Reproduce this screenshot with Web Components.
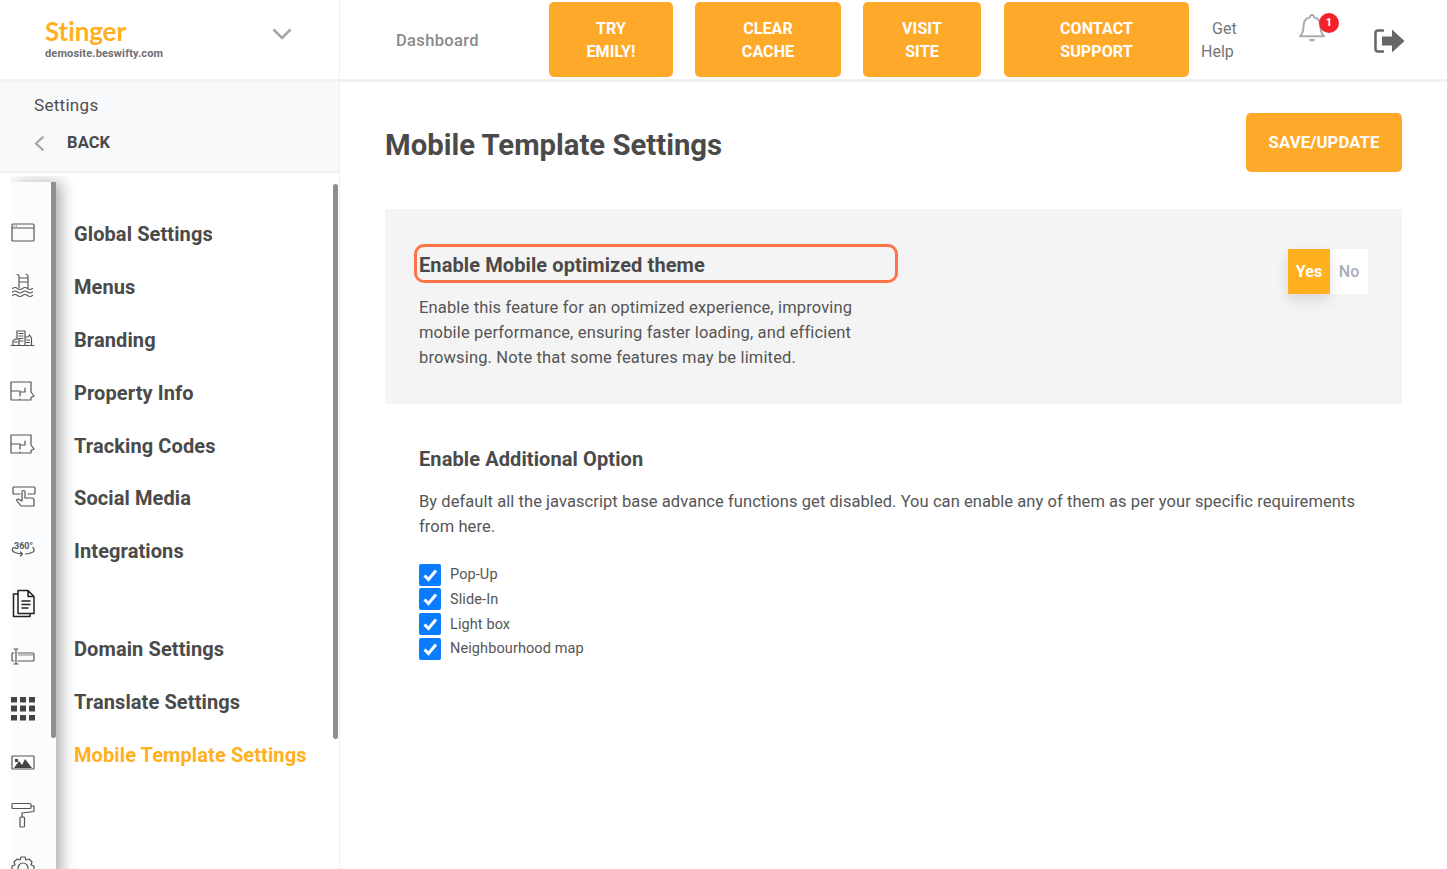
<!DOCTYPE html>
<html lang="en"><head><meta charset="utf-8"><title>Mobile Template Settings</title>
<style>
html,body{margin:0;height:100%;overflow:hidden;background:#fff}
body{font-family:Roboto,"Liberation Sans",sans-serif;color:#4a4a4a}
</style></head><body>
<app-shell></app-shell>
<script>
const S='fill="none" stroke="#555" stroke-width="1.2" stroke-linejoin="round" stroke-linecap="round"';
const ICONS={
browser:`<path ${S} d="M1 5q0-1 1-1h20q1 0 1 1v15q0 1-1 1H2q-1 0-1-1zM1 8h22"/><path stroke="#555" stroke-dasharray="1 1" d="M3 6h4"/>`,
pool:`<path ${S} d="M6 1.500q2 0 2 2v11M15 1.500q2 0 2 2v11M8 5h9M8 9h9M1.500 15.500q2.500-2 5 0t5 0 5 0 5 0M1.500 19q2.500-2 5 0t5 0 5 0 5 0M1.500 22.500q2.500-2 5 0t5 0 5 0 5 0"/>`,
city:`<path ${S} d="M0 19.500h23M2 19.500v-5l3-1.500h3v6.500M6 13V5h8v14.500M14 11h3l1.500-2 2 3v7.500M8 7.500h4M8 10h4M8 12.500h4M8 15h4M3.500 16h3M15.500 14h3M15.500 16.500h3"/>`,
plan:`<path ${S} d="M0 3h20v10l3 4-3 1.500V21H1q-1 0-1-1V3M0 12h9M14 9v4H9v4M9 21v-1"/>`,
touch:`<path ${S} d="M3 2h20q1 0 1 1v5q0 1-1 1h-6M9 9H3q-1 0-1-1V3q0-1 1-1M11 15V7q0-1.500 1.500-1.500T14 7v6h7q2 0 2 2v6H10l-4-5q-1-2 1-2l4 2"/>`,
deg:`<path ${S} d="M2.500 9.500Q-.5 12.500 4 14.500q3.500 1.200 7.500 1.500l-2-2m2 2-2 2M14.500 16q5-.4 7.500-2 2.500-2 0-4.500"/><text x="12.500" y="11" text-anchor="middle" font-family="Roboto,sans-serif" font-size="9" font-weight="700" fill="#555">360°</text>`,
doc:`<path fill="none" stroke="#222" stroke-width="1.500" stroke-linejoin="round" d="M7 1.500h10l6 6v17H7zM17 1.500v6h6M7 5H2.500v22.500H19V24.500"/><path stroke="#222" stroke-width="1.300" d="M10.500 12h9M10.500 15.500h9M10.500 19h7"/>`,
domain:`<path ${S} d="M7 9h15q1 0 1 1v6q0 1-1 1H7M3 9H2q-1 0-1 1v6q0 1 1 1h1M5 5v15M3 5h4M3 20h4"/><path stroke="#999" stroke-width="1.200" d="M7 11h15"/>`,
grid:`<path fill="#444" d="M0 0h6v5.500H0zM9 0h6v5.500H9zM18 0h6v5.500h-6zM0 8.500h6v6H0zM9 8.500h6v6H9zM18 8.500h6v6h-6zM0 18h6v5.500H0zM9 18h6v5.500H9zM18 18h6v5.500h-6z"/>`,
image:`<g transform="translate(0 5)"><path ${S} d="M1 1.500q0-.500.500-.500h21q.500 0 .500.500v12q0 .500-.500.500H1.500q-.500 0-.500-.500z"/><path fill="#444" d="M3 13l5-7 3 4 3-6 7 9zM4 4h3v3H4z"/></g>`,
roller:`<path ${S} d="M2 1.500h17q1 0 1 1v3q0 1-1 1H2q-1 0-1-1v-3q0-1 1-1zM20 4h3v5.500l-12 1.500v4"/><path ${S} stroke-width="1.400" d="M10 15h2.500q1 0 1 1v8q0 1-1 1H10q-1 0-1-1v-8q0-1 1-1z"/>`,
gear:`<path ${S} stroke-width="1.300" d="M10 1h4l1 3 3-1 3 3-1 3 3 1v4l-3 1 1 3-3 3-3-1-1 3h-4l-1-3-3 1-3-3 1-3-3-1v-4l3-1-1-3 3-3 3 1z"/><circle ${S} stroke-width="1.300" cx="12" cy="12" r="5"/>`
};
function comp(name,html){
  customElements.define(name,class extends HTMLElement{
    connectedCallback(){
      if(this.shadowRoot)return;
      const r=this.attachShadow({mode:'open'});
      r.innerHTML=typeof html==='function'?html(this):html;
    }
  });
}
comp('cta-button',el=>`<style>
:host{display:flex;align-items:center;justify-content:center;box-sizing:border-box;background:#ffa92b;border-radius:5px;color:#fff;font-weight:700;font-size:${el.getAttribute('size')||16}px;text-align:center;line-height:23px;letter-spacing:.1px}
</style><slot></slot>`);
comp('top-bar',`<style>
:host{display:flex;height:79px;border-bottom:3px solid #f1f1f1;background:#fff;box-sizing:content-box;position:relative}
.brand{width:340px;box-sizing:border-box;border-right:1px solid #f1f1f1;padding:18px 0 0 45px;position:relative;flex:none}
.logo{font:700 26px/26px Lato,sans-serif;color:#ffb01c;letter-spacing:-.1px}
.site{font:700 11px/13px Roboto,sans-serif;color:#6f6f6f;margin-top:3px;letter-spacing:.15px}
.chev{position:absolute;left:272px;top:28px}
nav{flex:1;display:flex;align-items:center;height:79px}
.dash{font-weight:500;font-size:16.500px;color:#8a8a8a;margin-left:56px;width:153px;letter-spacing:.35px;flex:none;margin-top:2px}
cta-button{height:75px;flex:none;margin-right:22px}
.help{width:57px;margin-left:-11px;font-size:16px;line-height:23px;color:#757575;flex:none}
.help span{display:block;padding-left:11px}
.help span:first-child{padding-left:22px}
.bell{position:relative;width:40px;height:40px;margin-left:52px;flex:none;align-self:flex-start;margin-top:13px}
.badge{position:absolute;left:20px;top:0;width:20px;height:20px;border-radius:50%;background:#f5222d;color:#fff;font:700 11px/20px Roboto,sans-serif;text-align:center}
.out{margin-left:35px;flex:none;display:block;margin-top:2px}
</style>
<div class="brand"><div class="logo">Stinger</div><div class="site">demosite.beswifty.com</div>
<svg class="chev" width="20" height="13" viewBox="0 0 20 13"><path d="M1.500 1.500L10 10l8.500-8.500" fill="none" stroke="#a5a5a5" stroke-width="2.600"/></svg></div>
<nav><span class="dash">Dashboard</span>
<cta-button style="width:124px">TRY<br>EMILY!</cta-button>
<cta-button style="width:146px">CLEAR<br>CACHE</cta-button>
<cta-button style="width:118px;margin-right:23px">VISIT<br>SITE</cta-button>
<cta-button style="width:185px;margin-right:12px">CONTACT<br>SUPPORT</cta-button>
<div class="help"><span>Get</span><span>Help</span></div>
<div class="bell"><svg width="26" height="30" viewBox="0 0 26 30" style="display:block"><path d="M13 2a2 2 0 0 1 2 2.200c4.500 1 6.500 4.500 6.500 9 0 5 1 7.500 3.500 10H1c2.500-2.500 3.500-5 3.500-10 0-4.500 2-8 6.500-9A2 2 0 0 1 13 2z" fill="none" stroke="#adadad" stroke-width="2" stroke-linejoin="round"/><path d="M10 26h6a3 2.500 0 0 1-6 0z" fill="#adadad"/></svg><span class="badge">1</span></div>
<svg class="out" width="31" height="26" viewBox="0 0 31 26"><path d="M9 2.500H4q-2.500 0-2.500 2.500v16q0 2.500 2.500 2.500h5" fill="none" stroke="#666" stroke-width="2.500" stroke-linecap="round"/><path d="M8 8.500h10V1.500L30.500 13 18 24.500v-7H8z" fill="#666"/></svg>
</nav>`);
comp('rail-icon',el=>`<style>:host{display:flex;height:53px;align-items:center;justify-content:flex-start;flex:none}svg{display:block;overflow:visible}</style>
<svg width="${el.getAttribute('w')||24}" height="${el.getAttribute('h')||24}" viewBox="0 0 ${el.getAttribute('w')||24} ${el.getAttribute('h')||24}">${ICONS[el.getAttribute('name')]}</svg>`);
comp('menu-item',el=>`<style>
:host{display:flex;align-items:center;height:52.800px;font-weight:700;font-size:20px;letter-spacing:.1px;color:${el.hasAttribute('active')?'#ffb01c':'#4a4a4a'};white-space:nowrap}
</style><slot></slot>`);
comp('side-bar',`<style>
:host{display:flex;flex-direction:column;width:340px;box-sizing:border-box;border-right:1px solid #f1f1f1;flex:none;height:787px;overflow:hidden}
.head{height:78px;background:#f8f9fb;border-bottom:2px solid #f1f1f1;flex:none;padding:11px 0 0 34px;box-sizing:content-box}
.t{font-size:17px;line-height:24px;color:#4f4f4f;letter-spacing:.3px}
.b{display:flex;align-items:center;font-weight:700;font-size:16.500px;line-height:24px;margin-top:14px;color:#4a4a4a;letter-spacing:.1px}
.b svg{margin-right:22px}
.body{flex:1;display:flex;position:relative;min-height:0}
.rail{width:46px;margin:9px 0 0 10px;height:700px;background:#fbfcfe;box-shadow:6px 0 14px rgba(0,0,0,.3);clip-path:inset(-6px -30px 0 0);position:relative;flex:none;display:flex;flex-direction:column;padding:23px 0 0 1px;box-sizing:border-box;border-radius:4px 0 0 0}
.rs{position:absolute;right:0;top:0;width:5px;height:556px;background:#8f8f8f;border-radius:0 0 3px 3px}
.list{flex:1;padding:35px 0 0 18px;display:flex;flex-direction:column;min-width:0}
.gap{height:45.200px;flex:none}
.ms{position:absolute;left:333px;top:11px;width:5px;height:555px;background:#8f8f8f;border-radius:3px}
</style>
<div class="head"><div class="t">Settings</div><div class="b"><svg width="11" height="17" viewBox="0 0 11 17"><path d="M9.500 1.500L2 8.500l7.500 7" fill="none" stroke="#a5a5a5" stroke-width="2.200"/></svg>BACK</div></div>
<div class="body">
<div class="rail"><span class="rs"></span>
<rail-icon name="browser"></rail-icon><rail-icon name="pool"></rail-icon><rail-icon name="city"></rail-icon><rail-icon name="plan"></rail-icon><rail-icon name="plan"></rail-icon><rail-icon name="touch"></rail-icon><rail-icon name="deg"></rail-icon><rail-icon name="doc" w="24" h="28"></rail-icon><rail-icon name="domain"></rail-icon><rail-icon name="grid"></rail-icon><rail-icon name="image"></rail-icon><rail-icon name="roller" h="26"></rail-icon><rail-icon name="gear"></rail-icon>
</div>
<div class="list">
<menu-item>Global Settings</menu-item><menu-item>Menus</menu-item><menu-item>Branding</menu-item><menu-item>Property Info</menu-item><menu-item>Tracking Codes</menu-item><menu-item>Social Media</menu-item><menu-item>Integrations</menu-item><div class="gap"></div><menu-item>Domain Settings</menu-item><menu-item>Translate Settings</menu-item><menu-item active>Mobile Template Settings</menu-item>
</div>
<span class="ms"></span>
</div>`);
comp('yes-no',`<style>
:host{display:flex;height:45px;flex:none}
.y{width:42px;background:#ffb01c;color:#fff;font-weight:700;font-size:16px;display:flex;align-items:center;justify-content:center;box-shadow:0 6px 14px rgba(0,0,0,.12);position:relative}
.n{width:38px;background:#fff;color:#a9afb8;font-weight:500;font-size:16px;display:flex;align-items:center;justify-content:center}
</style><span class="y">Yes</span><span class="n">No</span>`);
comp('check-row',`<style>
:host{display:flex;align-items:center;height:24.750px;font-size:14.500px;letter-spacing:.1px;color:#555}
i{width:22px;height:22px;border-radius:2px;background:#0a7cff;margin:0 9px 0 0;display:block;flex:none}
svg{display:block}
</style><i><svg width="22" height="22" viewBox="0 0 22 22"><path d="M5.500 11.500l4 4 7.500-9" fill="none" stroke="#fff" stroke-width="3"/></svg></i><slot></slot>`);
comp('settings-page',`<style>
:host{display:block;flex:1;min-width:0;padding:31px 45px 0 45px;box-sizing:border-box}
.top{display:flex;justify-content:space-between;align-items:flex-start;height:59px}
h1{margin:16px 0 0;font-size:29.300px;line-height:32px;font-weight:700;color:#4a4a4a;letter-spacing:0}
cta-button{width:156px;height:59px}
.card{background:#f4f4f4;margin-top:37px;height:195px;box-sizing:border-box;padding:35px 34px 0;display:flex;justify-content:space-between;align-items:flex-start}
.hl{width:484px;height:39px;box-sizing:border-box;border:3px solid #ff7446;border-radius:10px;margin:0 0 0 -5px;padding-left:2px;line-height:37px;font-size:20px;font-weight:700;color:#4a4a4a;letter-spacing:.1px;white-space:nowrap}
p{margin:0;font-size:16.500px;line-height:25px;color:#555;letter-spacing:.15px}
.l{width:470px}
.l p{margin-top:12px}
yes-no{margin-top:5px}
.more{padding:42px 34px 0}
h2{margin:0;font-size:20px;line-height:26px;font-weight:700;color:#4a4a4a;letter-spacing:.1px}
.more p{margin-top:17px;letter-spacing:.06px}
.checks{margin-top:23.300px}
</style>
<div class="top"><h1>Mobile Template Settings</h1><cta-button size="16.700">SAVE/UPDATE</cta-button></div>
<div class="card"><div class="l"><div class="hl">Enable Mobile optimized theme</div><p>Enable this feature for an optimized experience, improving mobile performance, ensuring faster loading, and efficient browsing. Note that some features may be limited.</p></div><yes-no></yes-no></div>
<div class="more"><h2>Enable Additional Option</h2><p>By default all the javascript base advance functions get disabled. You can enable any of them as per your specific requirements from here.</p>
<div class="checks"><check-row>Pop-Up</check-row><check-row>Slide-In</check-row><check-row>Light box</check-row><check-row>Neighbourhood map</check-row></div></div>`);
comp('app-shell',`<style>
:host{display:flex;flex-direction:column;height:869px;overflow:hidden}
.main{display:flex;flex:1;min-height:0}
</style><top-bar></top-bar><div class="main"><side-bar></side-bar><settings-page></settings-page></div>`);
</script>
</body></html>
